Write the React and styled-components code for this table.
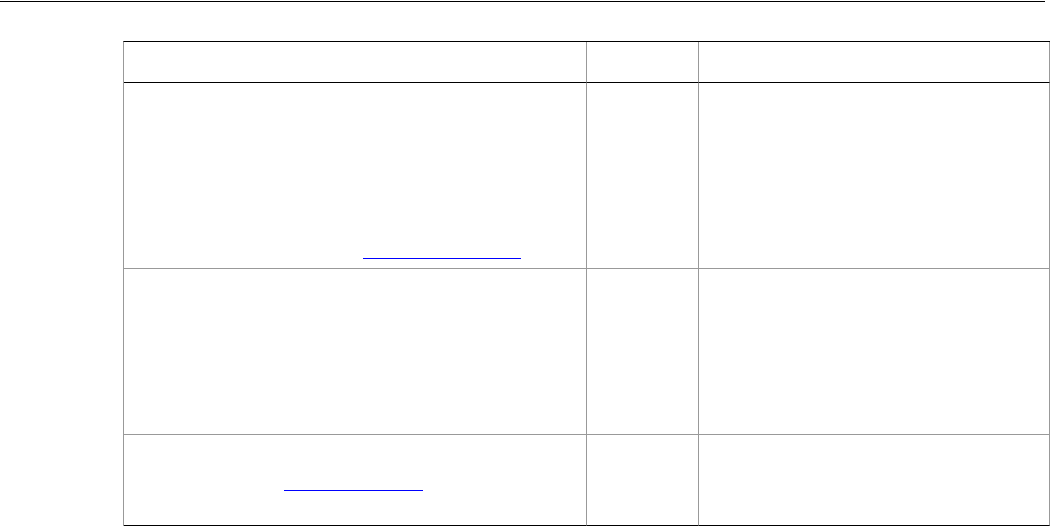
import React from 'react';
import styled, { createGlobalStyle } from 'styled-components';

const GlobalStyle = createGlobalStyle`
  body {
    margin: 0;
    background: #fff;
    font-family: "Liberation Sans", Arial, sans-serif;
  }
`;

const Page = styled.div`
  width: 1050px;
  height: 526px;
  overflow: hidden;
`;

const TopRule = styled.div`
  margin-top: 1px;
  width: 1045px;
  height: 1px;
  background: #000;
`;

const Table = styled.div`
  margin: 39px 0 0 123px;
  display: grid;
  grid-template-columns: 463px 112px 351px;
  grid-template-rows: 41px 186px 166px 91px;
  border-top: 1px solid #000;
  border-left: 1px solid #999;
  width: fit-content;
`;

const Cell = styled.div`
  box-sizing: border-box;
  border-right: 1px solid #999;
  border-bottom: 1px solid ${({ $edge }) => ($edge ? '#000' : '#999')};
  font-size: 13px;
  color: #000;
`;

const LinkLine = styled.a`
  display: block;
  width: ${({ $w }) => $w}px;
  height: 0;
  margin: ${({ $top }) => $top}px 0 0 ${({ $left }) => $left}px;
  border-bottom: 1px solid #0000ff;
  color: #0000ff;
`;

const rows = [
  { edge: true },
  { link: { top: 175, left: 239, w: 158 } },
  {},
  { edge: true, link: { top: 55, left: 160, w: 139 } },
];

export default function App() {
  return (
    <Page>
      <GlobalStyle />
      <TopRule />
      <Table>
        {rows.map((row, i) => (
          <React.Fragment key={i}>
            <Cell $edge={row.edge}>
              {row.link && (
                <LinkLine href="#" $top={row.link.top} $left={row.link.left} $w={row.link.w} />
              )}
            </Cell>
            <Cell $edge={row.edge} />
            <Cell $edge={row.edge} />
          </React.Fragment>
        ))}
      </Table>
    </Page>
  );
}
